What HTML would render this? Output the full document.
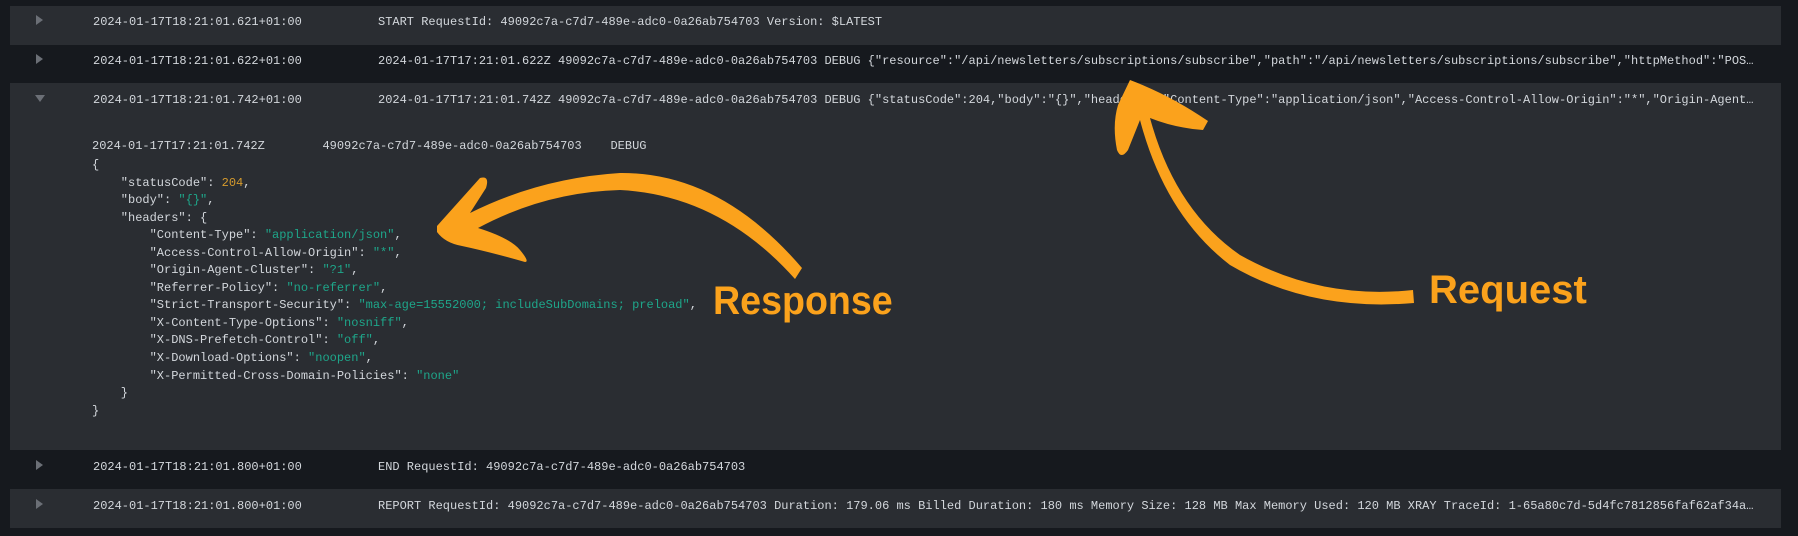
<!DOCTYPE html>
<html><head><meta charset="utf-8"><style>
html,body{margin:0;padding:0;}
body{width:1798px;height:536px;background:#16191e;position:relative;overflow:hidden;font-family:"Liberation Mono",monospace;font-size:12px;color:#d3d7dc;}
.row{position:absolute;left:10px;width:1771px;}
.l{background:#2a2d32;}
.d{background:#16191e;}
.tri{position:absolute;left:26px;width:0;height:0;border-top:5px solid transparent;border-bottom:5px solid transparent;border-left:7px solid #6b6f76;}
.tri.down{border-left:5px solid transparent;border-right:5px solid transparent;border-top:7px solid #6b6f76;border-bottom:0;left:25px;}
.ts{position:absolute;left:83px;white-space:pre;}
.msg{position:absolute;left:368px;width:1381px;white-space:pre;overflow:hidden;text-overflow:ellipsis;}
.j{position:absolute;left:82px;white-space:pre;line-height:17.55px;}
.n{color:#d69b2d;}
.s{color:#1ea68a;}
.lab{position:absolute;font-family:"Liberation Sans",sans-serif;font-weight:bold;color:#fba21c;font-size:40px;transform-origin:left top;}
</style></head><body>
<div class="row l" style="top:6px;height:39px;">
  <div class="tri" style="top:9px;"></div>
  <div class="ts" style="top:9px;">2024-01-17T18:21:01.621+01:00</div>
  <div class="msg" style="top:9px;">START RequestId: 49092c7a-c7d7-489e-adc0-0a26ab754703 Version: $LATEST</div>
</div>
<div class="row d" style="top:45px;height:38px;">
  <div class="tri" style="top:9px;"></div>
  <div class="ts" style="top:9px;">2024-01-17T18:21:01.622+01:00</div>
  <div class="msg" style="top:9px;">2024-01-17T17:21:01.622Z 49092c7a-c7d7-489e-adc0-0a26ab754703 DEBUG {"resource":"/api/newsletters/subscriptions/subscribe","path":"/api/newsletters/subscriptions/subscribe","httpMethod":"POST","headers":{}}</div>
</div>
<div class="row l" style="top:83px;height:367px;">
  <div class="tri down" style="top:12px;"></div>
  <div class="ts" style="top:10px;">2024-01-17T18:21:01.742+01:00</div>
  <div class="msg" style="top:10px;">2024-01-17T17:21:01.742Z 49092c7a-c7d7-489e-adc0-0a26ab754703 DEBUG {"statusCode":204,"body":"{}","headers":{"Content-Type":"application/json","Access-Control-Allow-Origin":"*","Origin-Agent-Cluster":"?1"}}</div>
  <div class="j" style="top:55px;">2024-01-17T17:21:01.742Z        49092c7a-c7d7-489e-adc0-0a26ab754703    DEBUG</div>
  <div class="j" style="top:74px;">{
    "statusCode": <span class="n">204</span>,
    "body": <span class="s">"{}"</span>,
    "headers": {
        "Content-Type": <span class="s">"application/json"</span>,
        "Access-Control-Allow-Origin": <span class="s">"*"</span>,
        "Origin-Agent-Cluster": <span class="s">"?1"</span>,
        "Referrer-Policy": <span class="s">"no-referrer"</span>,
        "Strict-Transport-Security": <span class="s">"max-age=15552000; includeSubDomains; preload"</span>,
        "X-Content-Type-Options": <span class="s">"nosniff"</span>,
        "X-DNS-Prefetch-Control": <span class="s">"off"</span>,
        "X-Download-Options": <span class="s">"noopen"</span>,
        "X-Permitted-Cross-Domain-Policies": <span class="s">"none"</span>
    }
}</div>
</div>
<div class="row d" style="top:450px;height:39px;">
  <div class="tri" style="top:10px;"></div>
  <div class="ts" style="top:10px;">2024-01-17T18:21:01.800+01:00</div>
  <div class="msg" style="top:10px;">END RequestId: 49092c7a-c7d7-489e-adc0-0a26ab754703</div>
</div>
<div class="row l" style="top:489px;height:39px;">
  <div class="tri" style="top:10px;"></div>
  <div class="ts" style="top:10px;">2024-01-17T18:21:01.800+01:00</div>
  <div class="msg" style="top:10px;">REPORT RequestId: 49092c7a-c7d7-489e-adc0-0a26ab754703 Duration: 179.06 ms Billed Duration: 180 ms Memory Size: 128 MB Max Memory Used: 120 MB XRAY TraceId: 1-65a80c7d-5d4fc7812856faf62af34a1b</div>
</div>
<svg width="1798" height="536" style="position:absolute;left:0;top:0;">
  <path fill="#fba21c" d="M437,226 L480,178 Q490,175 486,188 L470,213 Q540,178 620,173 Q720,172 802,268 L795,279 Q720,195 620,190 Q545,192 478,228 Q510,238 520,250 Q530,262 525,262 Q490,252 462,246 Q445,243 437,232 Z"/>
  <path fill="#fba21c" d="M1130,80 Q1170,95 1208,121 L1203,130 Q1175,128 1150,118 Q1175,210 1240,255 Q1320,300 1413,290 L1414,303 Q1310,312 1230,265 Q1165,215 1140,120 L1128,150 Q1121,160 1117,150 Q1112,125 1118,105 Z"/>
</svg>
<div class="lab" style="left:713px;top:279px;transform:scaleX(0.94);">Response</div>
<div class="lab" style="left:1429px;top:268px;">Request</div>
</body></html>
